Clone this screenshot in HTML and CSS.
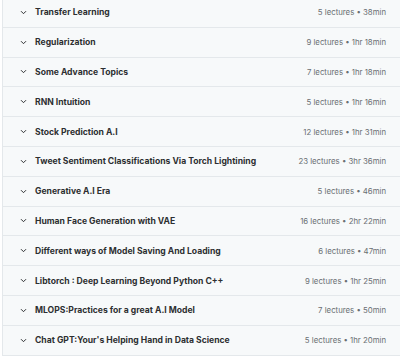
FILE: index.html
```html
<!DOCTYPE html>
<html lang="en">
<head>
    <meta charset="UTF-8">
    <meta name="viewport" content="width=device-width, initial-scale=1.0">
    <title>Course content</title>
    <link rel="stylesheet" href="styles.css">
</head>
<body>
    <div class="curriculum">
        <div class="section">
            <span class="chevron"><svg width="7" height="5" viewBox="0 0 7 5"><path d="M1 1.2 3.5 3.7 6 1.2" fill="none" stroke="#2d2f31" stroke-width="1"/></svg></span>
            <span class="title">Transfer Learning</span>
            <span class="meta">5 lectures • 38min</span>
        </div>
        <div class="section">
            <span class="chevron"><svg width="7" height="5" viewBox="0 0 7 5"><path d="M1 1.2 3.5 3.7 6 1.2" fill="none" stroke="#2d2f31" stroke-width="1"/></svg></span>
            <span class="title">Regularization</span>
            <span class="meta">9 lectures • 1hr 18min</span>
        </div>
        <div class="section">
            <span class="chevron"><svg width="7" height="5" viewBox="0 0 7 5"><path d="M1 1.2 3.5 3.7 6 1.2" fill="none" stroke="#2d2f31" stroke-width="1"/></svg></span>
            <span class="title">Some Advance Topics</span>
            <span class="meta">7 lectures • 1hr 18min</span>
        </div>
        <div class="section">
            <span class="chevron"><svg width="7" height="5" viewBox="0 0 7 5"><path d="M1 1.2 3.5 3.7 6 1.2" fill="none" stroke="#2d2f31" stroke-width="1"/></svg></span>
            <span class="title">RNN Intuition</span>
            <span class="meta">5 lectures • 1hr 16min</span>
        </div>
        <div class="section">
            <span class="chevron"><svg width="7" height="5" viewBox="0 0 7 5"><path d="M1 1.2 3.5 3.7 6 1.2" fill="none" stroke="#2d2f31" stroke-width="1"/></svg></span>
            <span class="title">Stock Prediction A.I</span>
            <span class="meta">12 lectures • 1hr 31min</span>
        </div>
        <div class="section">
            <span class="chevron"><svg width="7" height="5" viewBox="0 0 7 5"><path d="M1 1.2 3.5 3.7 6 1.2" fill="none" stroke="#2d2f31" stroke-width="1"/></svg></span>
            <span class="title">Tweet Sentiment Classifications Via Torch Lightining</span>
            <span class="meta">23 lectures • 3hr 36min</span>
        </div>
        <div class="section">
            <span class="chevron"><svg width="7" height="5" viewBox="0 0 7 5"><path d="M1 1.2 3.5 3.7 6 1.2" fill="none" stroke="#2d2f31" stroke-width="1"/></svg></span>
            <span class="title">Generative A.I Era</span>
            <span class="meta">5 lectures • 46min</span>
        </div>
        <div class="section">
            <span class="chevron"><svg width="7" height="5" viewBox="0 0 7 5"><path d="M1 1.2 3.5 3.7 6 1.2" fill="none" stroke="#2d2f31" stroke-width="1"/></svg></span>
            <span class="title">Human Face Generation with VAE</span>
            <span class="meta">16 lectures • 2hr 22min</span>
        </div>
        <div class="section">
            <span class="chevron"><svg width="7" height="5" viewBox="0 0 7 5"><path d="M1 1.2 3.5 3.7 6 1.2" fill="none" stroke="#2d2f31" stroke-width="1"/></svg></span>
            <span class="title">Different ways of Model Saving And Loading</span>
            <span class="meta">6 lectures • 47min</span>
        </div>
        <div class="section">
            <span class="chevron"><svg width="7" height="5" viewBox="0 0 7 5"><path d="M1 1.2 3.5 3.7 6 1.2" fill="none" stroke="#2d2f31" stroke-width="1"/></svg></span>
            <span class="title">Libtorch : Deep Learning Beyond Python C++</span>
            <span class="meta">9 lectures • 1hr 25min</span>
        </div>
        <div class="section">
            <span class="chevron"><svg width="7" height="5" viewBox="0 0 7 5"><path d="M1 1.2 3.5 3.7 6 1.2" fill="none" stroke="#2d2f31" stroke-width="1"/></svg></span>
            <span class="title">MLOPS:Practices for a great A.I Model</span>
            <span class="meta">7 lectures • 50min</span>
        </div>
        <div class="section">
            <span class="chevron"><svg width="7" height="5" viewBox="0 0 7 5"><path d="M1 1.2 3.5 3.7 6 1.2" fill="none" stroke="#2d2f31" stroke-width="1"/></svg></span>
            <span class="title">Chat GPT:Your's Helping Hand in Data Science</span>
            <span class="meta">5 lectures • 1hr 20min</span>
        </div>
    </div>
</body>
</html>
```

FILE: styles.css
```css
* {
    box-sizing: border-box;
}
body {
    margin: 0;
    padding: 0 0 0 2px;
    background: #fff;
    font-family: Inter, "Liberation Sans", sans-serif;
    overflow: hidden;
}
.curriculum {
    margin-top: -2px;
    border-left: 1px solid #e4e8eb;
    background: #f7f9fa;
}
.section {
    display: flex;
    align-items: center;
    height: 29.8px;
    padding: 0 14px 0 17px;
    border-bottom: 1px solid #e4e8eb;
}
.chevron {
    display: flex;
    width: 15px;
}
.title {
    flex: 1;
    font-size: 8.6px;
    font-weight: 700;
    color: #2d2f31;
    white-space: nowrap;
}
.meta {
    font-size: 7.8px;
    color: #6a6f73;
    white-space: nowrap;
}
```
